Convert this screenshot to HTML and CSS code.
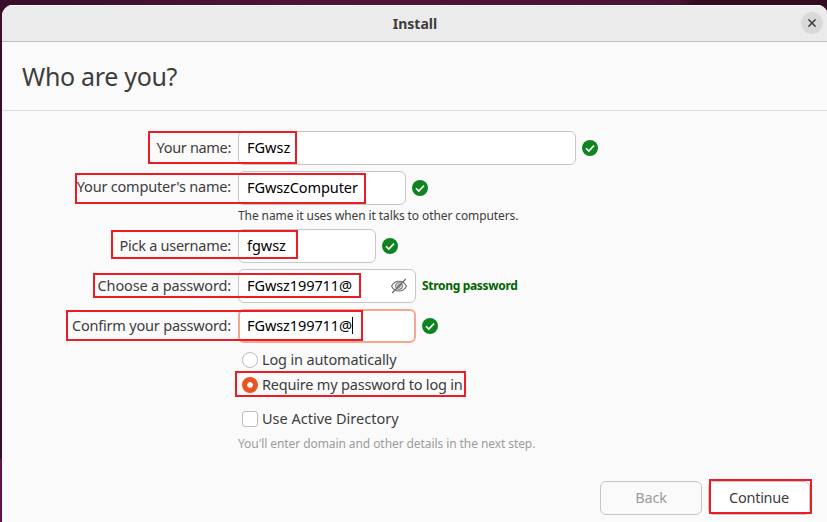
FILE: index.html
```html
<!DOCTYPE html>
<html lang="en">
<head>
<meta charset="utf-8">
<title>Install</title>
<link rel="stylesheet" href="styles.css">
</head>
<body>
<svg class="defs" width="0" height="0" aria-hidden="true">
  <symbol id="ok" viewBox="0 0 16 16"><circle cx="8" cy="8" r="8" fill="#0e8420"/><path d="M4 8.2 6.8 11 12 5.6" fill="none" stroke="#fff" stroke-width="1.6"/></symbol>
</svg>
<main class="window">
  <header class="titlebar">
    <span class="title">Install</span>
    <button class="close" aria-label="Close"><svg width="8" height="8" viewBox="0 0 8 8"><path d="M.4.4 7.6 7.6M7.6.4.4 7.6" stroke="#3d3d3d" stroke-width="1.5"/></svg></button>
  </header>
  <div class="heading"><h1>Who are you?</h1></div>
  <form class="form">
    <div class="row">
      <label><span class="t-name">Your name:</span></label>
      <div class="field w-name"><span class="v-name">FGwsz</span></div>
      <svg class="ok"><use href="#ok"/></svg>
    </div>
    <div class="row">
      <label><span class="t-computer">Your computer's name:</span></label>
      <div class="field w-computer"><span class="v-computer">FGwszComputer</span></div>
      <svg class="ok"><use href="#ok"/></svg>
    </div>
    <p class="hint"><span class="t-hint">The name it uses when it talks to other computers.</span></p>
    <div class="row">
      <label><span class="t-user">Pick a username:</span></label>
      <div class="field w-user"><span class="v-user">fgwsz</span></div>
      <svg class="ok"><use href="#ok"/></svg>
    </div>
    <div class="row">
      <label><span class="t-pass">Choose a password:</span></label>
      <div class="field w-pass"><span class="v-pass">FGwsz199711@</span>
        <svg class="eye" width="16" height="16" viewBox="0 0 16 16" fill="none" stroke="#666" stroke-width="1.1"><path d="M.6 8.2C2.3 4.8 5 3.3 8 3.3s5.700 1.500 7.400 4.900C13.700 11.500 11 13 8 13S2.300 11.500.6 8.200Z"/><circle cx="8" cy="8" r="3.300"/><circle cx="8" cy="8" r="1.200"/><path d="M1.200 15 14.800 1"/></svg>
      </div>
      <span class="strength">Strong password</span>
    </div>
    <div class="row">
      <label><span class="t-confirm">Confirm your password:</span></label>
      <div class="field w-pass focused"><span class="v-pass">FGwsz199711@</span><i class="caret"></i></div>
      <svg class="ok"><use href="#ok"/></svg>
    </div>
    <div class="options">
      <div class="option"><i class="radio"></i><span class="t-auto">Log in automatically</span></div>
      <div class="option"><i class="radio checked"></i><span class="t-require">Require my password to log in</span></div>
      <div class="option directory"><i class="checkbox"></i><span class="t-directory">Use Active Directory</span></div>
      <p class="note">You'll enter domain and other details in the next step.</p>
    </div>
  </form>
  <footer class="actions">
    <button class="btn back" disabled>Back</button>
    <button class="btn next">Continue</button>
  </footer>
</main>
<i class="mark m-name"></i>
<i class="mark m-computer"></i>
<i class="mark m-user"></i>
<i class="mark m-pass"></i>
<i class="mark m-confirm"></i>
<i class="mark m-require"></i>
<i class="mark m-continue"></i>
</body>
</html>
```
FILE: styles.css
```css
* { box-sizing: border-box; }
html { height: 100%; overflow: hidden; }
body {
  margin: 0;
  height: 522px;
  padding: 5px 0 0 2px;
  overflow: hidden;
  position: relative;
  background: linear-gradient(90deg, #3a0d2b, #4d1537 35%, #4a1433 82%, #330b20 84%, #330b20) top / 100% 5px no-repeat, linear-gradient(#3a0d2b, #3d0c2d 458px, #651249 460px);
  font: 14.5px/20px "Noto Sans", "Open Sans", sans-serif;
  color: #3d3d3d;
}
.defs { position: absolute; }
h1, p { margin: 0; font-weight: 400; }
span { white-space: nowrap; }
.window {
  width: 826px;
  height: 517px;
  display: flex;
  flex-direction: column;
  background: #fafafa;
  border-radius: 11px 11px 0 0;
  overflow: hidden;
}
.titlebar {
  height: 37px;
  flex: none;
  display: grid;
  grid-template-columns: 1fr auto 1fr;
  align-items: center;
  background: #ebebeb;
  border-top: 1px solid #fff;
  border-bottom: 1px solid #bfbfbf;
  padding-right: 5px;
}
.title { grid-column: 2; font-weight: 700; font-size: 14px; padding-left: 5px; }
.close {
  justify-self: end;
  width: 22px;
  height: 22px;
  margin-bottom: 1px;
  padding: 0;
  border: 0;
  border-radius: 50%;
  background: #d9d9d9;
  display: grid;
  place-items: center;
}
.heading { height: 69px; flex: none; padding: 17px 20px 0; border-bottom: 1px solid #dcdcdc; }
h1 { font-size: 25px; line-height: 34px; letter-spacing: -.32px; white-space: nowrap; }
.form { display: flex; flex-direction: column; gap: 6px; padding-top: 20px; }
.row { display: flex; align-items: center; gap: 6px; height: 34px; }
label { width: 230px; display: flex; justify-content: flex-end; padding-right: 1px; }
label span, .field span { padding-bottom: 2px; }
.t-name { letter-spacing: -.33px; }
.t-computer { letter-spacing: -.2px; padding-bottom: 4px; }
.t-user { letter-spacing: -.26px; }
.t-pass { letter-spacing: -.15px; }
.t-confirm { letter-spacing: -.2px; }
.v-computer, .v-pass { letter-spacing: -.09px; }
.v-user { letter-spacing: -.05px; }
.field {
  height: 34px;
  border: 1px solid #c6c6c6;
  border-radius: 6px;
  background: #fff;
  color: #000;
  padding: 0 8px;
  display: flex;
  align-items: center;
}
.w-name { width: 338px; }
.w-computer { width: 168px; }
.w-user { width: 138px; }
.w-pass { width: 178px; }
.focused { border: 2px solid #f4a78e; padding: 0 7px; }
.caret { width: 1px; height: 17px; margin-bottom: 1px; background: #000; }
.eye { margin-left: auto; }
.ok { width: 16px; height: 16px; }
.hint { height: 12px; line-height: 9px; padding-left: 236px; font-size: 12px; letter-spacing: -.1px; }
.strength { font-size: 12px; font-weight: 700; letter-spacing: -.32px; color: #006400; }
.options { padding-left: 236px; display: flex; flex-direction: column; margin-top: 1px; }
.option { height: 25px; display: flex; align-items: center; gap: 4px; padding-left: 4px; }
.option span { padding-bottom: 2px; }
.options .option:first-child { height: 20px; margin-bottom: 2px; }
.t-auto { letter-spacing: -.14px; }
.t-require { letter-spacing: -.2px; }
.radio, .checkbox { width: 16px; height: 16px; border: 1px solid #bdbdbd; background: #fff; border-radius: 50%; }
.checkbox { border-radius: 3px; }
.radio.checked { border: 0; background: radial-gradient(circle, #fff 2.4px, #e95420 3.2px); }
.directory { margin-top: 9px; }
.note { color: #9c9c9c; font-size: 12px; letter-spacing: -.08px; white-space: nowrap; line-height: 20px; margin-top: 3px; }
.actions { margin-top: auto; display: flex; justify-content: flex-end; gap: 6px; padding: 0 18px 7px; }
.btn {
  width: 102px;
  height: 34px;
  border: 1px solid #c6c6c6;
  border-radius: 6px;
  background: #fff;
  font: inherit;
  color: #3d3d3d;
  padding: 0 0 2px;
}
.back { background: #fafafa; color: #9c9c9c; letter-spacing: -.2px; }
.next { letter-spacing: -.25px; }
.mark { position: absolute; border: 2px solid #ed1c24; }
.m-name { left: 148px; top: 131px; width: 149px; height: 33px; }
.m-computer { left: 75px; top: 173px; width: 291px; height: 31px; }
.m-user { left: 111px; top: 230px; width: 187px; height: 29px; }
.m-pass { left: 93px; top: 273px; width: 268px; height: 25px; }
.m-confirm { left: 66px; top: 310px; width: 297px; height: 31px; }
.m-require { left: 235px; top: 371px; width: 231px; height: 26px; }
.m-continue { left: 709px; top: 479px; width: 103px; height: 35px; }
```
